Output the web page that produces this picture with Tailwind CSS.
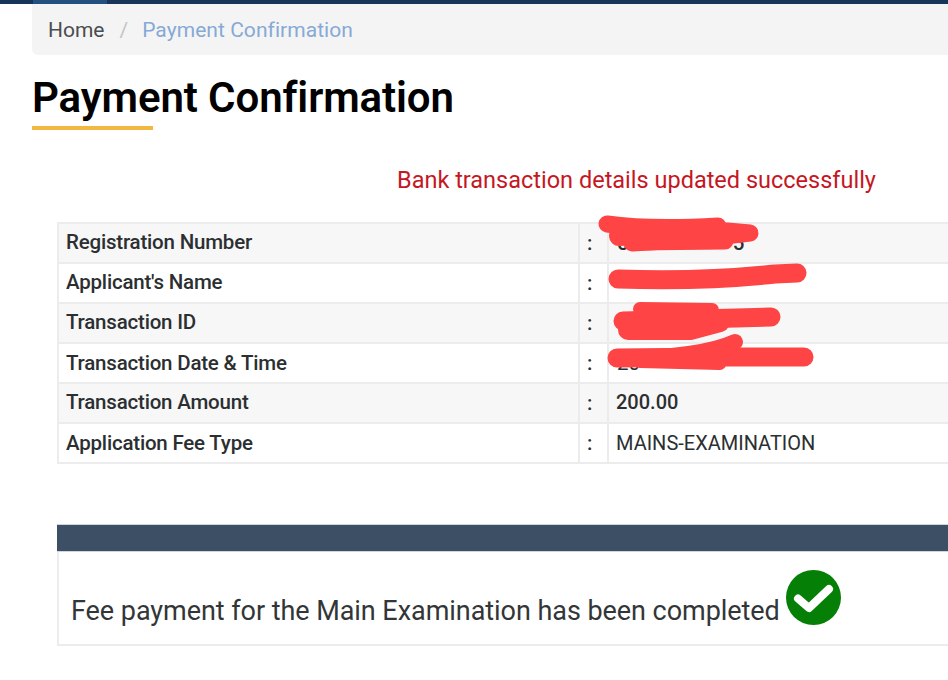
<!DOCTYPE html>
<html lang="en">
<head>
    <meta charset="UTF-8">
    <meta name="viewport" content="width=device-width, initial-scale=1.0">
    <title>Payment Confirmation</title>
    <script src="https://cdn.jsdelivr.net/npm/@tailwindcss/browser@4"></script>
</head>
<body class="bg-white font-['Roboto',sans-serif] overflow-hidden h-[680px] w-[948px] relative">

    <!-- Top bar -->
    <div class="h-1 bg-[#17355a] pl-[33px]">
        <div class="h-1 w-[74px] bg-[#24507f]"></div>
    </div>

    <div class="pl-8 w-[948px]">
        <!-- Breadcrumb -->
        <div class="h-[51px] bg-[#f4f4f4] rounded-bl-md flex items-center pl-4 pt-[3px] text-[21px]">
            <span class="text-[#4a4d4f]">Home</span>
            <span class="text-[#c2c4c6] ml-[15px] mr-[14px]">/</span>
            <span class="text-[#86a9d6] tracking-[0.05px]">Payment Confirmation</span>
        </div>

        <!-- Title -->
        <h1 class="mt-[17px] text-[42px] leading-[52px] font-semibold text-black tracking-[-0.1px]">Payment Confirmation</h1>
        <div class="mt-[2px] w-[121px] h-1 bg-[#f0b840]"></div>

        <!-- Message -->
        <p class="mt-[34px] ml-[365px] text-[23.5px] leading-[32px] text-[#c5171f]">Bank transaction details updated successfully</p>

        <!-- Details -->
        <div class="mt-[26px] ml-[25px] border-t-2 border-l-2 border-[#ececec] text-[20.5px] text-[#2c2f31]">
            <div class="h-10 flex items-center bg-[#f7f7f7] border-b-2 border-[#ececec]">
                <div class="w-[519px] pl-[7px] pb-[2px] font-medium tracking-[-0.2px]">Registration Number</div>
                <div class="w-[29px] h-full border-l-2 border-[#ececec] flex items-center pl-[7px] font-medium">:</div>
                <div class="h-full border-l-2 border-[#ececec] flex items-center pl-[8px] font-medium">5<span class="ml-[104px]">5</span></div>
            </div>
            <div class="h-10 flex items-center border-b-2 border-[#ececec]">
                <div class="w-[519px] pl-[7px] pb-[2px] font-medium tracking-[-0.2px]">Applicant's Name</div>
                <div class="w-[29px] h-full border-l-2 border-[#ececec] flex items-center pl-[7px] font-medium">:</div>
                <div class="h-full border-l-2 border-[#ececec]"></div>
            </div>
            <div class="h-10 flex items-center bg-[#f7f7f7] border-b-2 border-[#ececec]">
                <div class="w-[519px] pl-[7px] pb-[2px] font-medium tracking-[-0.2px]">Transaction ID</div>
                <div class="w-[29px] h-full border-l-2 border-[#ececec] flex items-center pl-[7px] font-medium">:</div>
                <div class="h-full border-l-2 border-[#ececec]"></div>
            </div>
            <div class="h-10 flex items-center border-b-2 border-[#ececec]">
                <div class="w-[519px] pl-[7px] font-medium tracking-[-0.2px]">Transaction Date &amp; Time</div>
                <div class="w-[29px] h-full border-l-2 border-[#ececec] flex items-center pl-[7px] font-medium">:</div>
                <div class="h-full border-l-2 border-[#ececec] flex items-center pl-[8px]">20</div>
            </div>
            <div class="h-10 flex items-center bg-[#f7f7f7] border-b-2 border-[#ececec]">
                <div class="w-[519px] pl-[7px] pb-[2px] font-medium tracking-[-0.2px]">Transaction Amount</div>
                <div class="w-[29px] h-full border-l-2 border-[#ececec] flex items-center pl-[7px] font-medium">:</div>
                <div class="h-full border-l-2 border-[#ececec] flex items-center pl-[7px] pb-[2px] font-medium text-[20px]">200.00</div>
            </div>
            <div class="h-10 flex items-center border-b-2 border-[#ececec]">
                <div class="w-[519px] pl-[7px] font-medium tracking-[-0.2px]">Application Fee Type</div>
                <div class="w-[29px] h-full border-l-2 border-[#ececec] flex items-center pl-[7px] font-medium">:</div>
                <div class="h-full border-l-2 border-[#ececec] flex items-center pl-[7px] text-[20px]">MAINS-EXAMINATION</div>
            </div>
        </div>

        <!-- Fee status panel -->
        <div class="mt-[60px] ml-[25px]">
            <div class="h-[28px] bg-[#3c4f64] border-t border-b border-[#cfd6de]"></div>
            <div class="h-[94px] flex items-start pl-[12px] border-l-2 border-b-2 border-[#ececec]">
                <span class="mt-[43px] text-[27px] leading-[32px] text-[#333638] tracking-[-0.05px] whitespace-nowrap">Fee payment for the Main Examination has been completed</span>
                <svg class="mt-[18px] ml-[6px] w-[55px] h-[55px] shrink-0" viewBox="0 0 55 55">
                    <circle cx="27.5" cy="27.5" r="27.5" fill="#057f05"/>
                    <path d="M12 28.5 L23 38 L43 19" fill="none" stroke="#fff" stroke-width="8" stroke-linejoin="round" stroke-linecap="round"/>
                </svg>
            </div>
        </div>
    </div>

    <!-- Red scribbles drawn over the private values -->
    <svg class="absolute inset-0 w-[948px] h-[680px]" viewBox="0 0 948 680">
        <g fill="none" stroke="#fe4444" stroke-linecap="round" stroke-linejoin="round">
            <path d="M607 224 Q650 230 718 226 L716 230 L750 233 L700 239 L632 243" stroke-width="17"/>
            <path d="M619 236 L700 232" stroke-width="20"/>
            <path d="M634 242 L725 241" stroke-width="17"/>
            <path d="M618 279 Q700 282 775 274 L797 273" stroke-width="19"/>
            <path d="M623 321 L771 317" stroke-width="19"/>
            <path d="M640 309 L712 310 L700 322" stroke-width="14"/>
            <path d="M628 330 L690 330 L720 322" stroke-width="20"/>
            <path d="M617 358 Q700 358 735 342" stroke-width="16"/>
            <path d="M617 358 L720 357 L804 357" stroke-width="19"/>
            <path d="M640 362 L720 364" stroke-width="12"/>
        </g>
    </svg>

</body>
</html>
